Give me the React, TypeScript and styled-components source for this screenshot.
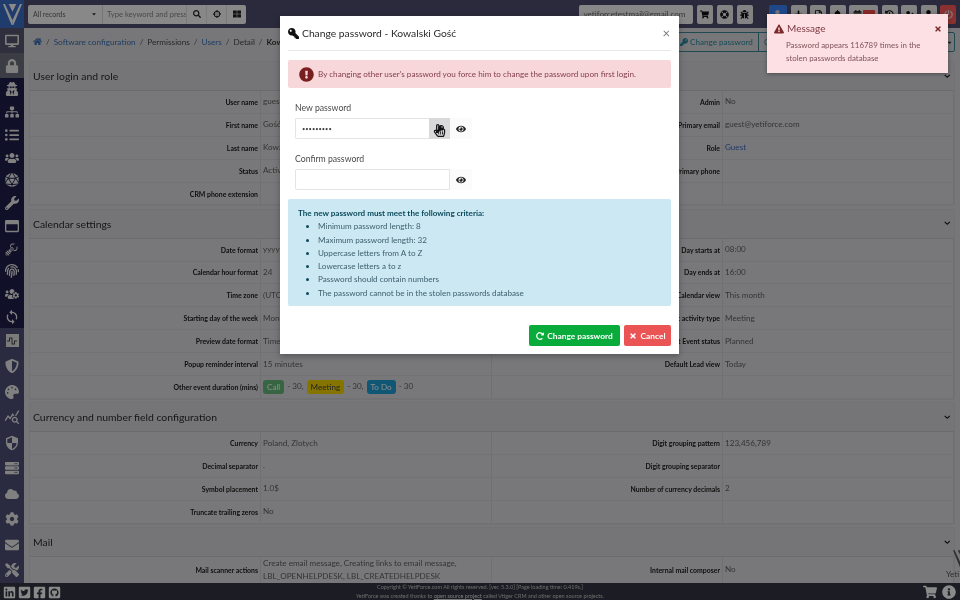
import React from 'react';
import styled, { createGlobalStyle } from 'styled-components';
import {
  FaHome, FaKey, FaSearch, FaThLarge, FaCrosshairs, FaShoppingCart, FaLifeRing, FaBug, FaPlus, FaRegFileAlt, FaBell,
  FaCalendarAlt, FaHistory, FaUserPlus, FaUser, FaPowerOff, FaChevronDown, FaEye, FaExclamationCircle, FaExclamationTriangle,
  FaTimes, FaRedoAlt, FaRegHandPointer, FaLinkedin, FaTwitterSquare, FaFacebookSquare, FaGithubSquare, FaInfoCircle,
  FaDesktop, FaLock, FaUserSecret, FaSitemap, FaListUl, FaUsers, FaDiceD20, FaWrench, FaRegWindowMaximize, FaFingerprint,
  FaUsersCog, FaShieldAlt, FaPalette, FaServer, FaCloud, FaCog, FaEnvelope, FaTools, FaWaveSquare, FaCaretDown,
} from 'react-icons/fa';
import { GiRobotGrab } from 'react-icons/gi';
import { MdSync, MdQueryStats, MdOutlineSecurity } from 'react-icons/md';

const GlobalStyle = createGlobalStyle`
  html, body { margin: 0; padding: 0; }
  body { font-family: Lato, "Open Sans", sans-serif; }
  * { box-sizing: border-box; }
`;

const Screen = styled.div`
  position: relative;
  width: 960px;
  height: 600px;
  overflow: hidden;
  display: grid;
  grid-template-columns: 24px 1fr;
  grid-template-rows: 583px 17px;
  background: #dcdbde;
  filter: blur(0.35px);
`;

const Sidebar = styled.nav`
  display: flex;
  flex-direction: column;
`;

const LogoTile = styled.div`
  height: 28px;
  background: #3a70c8;
  display: flex;
  align-items: center;
  justify-content: center;
  svg { width: 19px; height: 21px; }
`;

const NavGroup = styled.div<{ $bg: string; $h: number }>`
  display: flex;
  flex-direction: column;
  height: ${(p) => p.$h}px;
  background: ${(p) => p.$bg};
`;

const NavItem = styled.div<{ $active?: string }>`
  flex: 1;
  display: flex;
  align-items: center;
  justify-content: center;
  color: #ececec;
  font-size: 14px;
  background: ${(p) => p.$active || 'transparent'};
`;

const NavTile = styled.span`
  width: 13px;
  height: 13px;
  display: flex;
  align-items: center;
  justify-content: center;
  background: #e4e4e4;
  color: #444;
  font-size: 10px;
`;

const Main = styled.div`
  display: flex;
  flex-direction: column;
  min-width: 0;
`;

const TopBar = styled.header`
  height: 28px;
  flex: none;
  background: #4e4e6f;
  display: flex;
  align-items: center;
  padding: 0 4px;
`;

const SearchGroup = styled.div`
  display: flex;
  height: 19px;
  background: #fcfcfc;
  border-radius: 2px;
  color: #666;
  font-size: 7px;
  align-items: center;
`;

const RecordSelect = styled.div`
  width: 75px;
  height: 100%;
  display: flex;
  align-items: center;
  justify-content: space-between;
  padding: 0 5px;
  border-right: 1px solid #ddd;
  svg { font-size: 6px; color: #333; }
`;

const KeywordField = styled.div`
  width: 83px;
  padding-left: 4px;
  white-space: nowrap;
  overflow: hidden;
  font-size: 7.6px;
  color: #888;
`;

const SearchTool = styled.div`
  width: 20px;
  height: 100%;
  display: flex;
  align-items: center;
  justify-content: center;
  border-left: 1px solid #e4e4e4;
  color: #222;
  font-size: 8px;
`;

const Spacer = styled.div`
  flex: 1;
`;

const EmailBox = styled.div`
  width: 114px;
  height: 19px;
  border-radius: 2px;
  background: #fafafa;
  color: #666;
  font-size: 8.1px;
  line-height: 19px;
  padding-left: 5px;
  white-space: nowrap;
  margin-right: 4px;
`;

const TopButton = styled.div<{ $bg?: string; $w?: number; $mr?: number }>`
  position: relative;
  width: ${(p) => p.$w || 16}px;
  height: 19px;
  margin-right: ${(p) => p.$mr ?? 3.5}px;
  border-radius: 2px;
  background: ${(p) => p.$bg || '#f2f2f2'};
  color: #111;
  font-size: 9px;
  display: flex;
  align-items: center;
  justify-content: center;
`;

const BadgeCount = styled.span`
  width: 12px;
  height: 9px;
  margin-left: 1px;
  background: #ff4a4a;
  border-radius: 1px;
`;

const Crumbs = styled.div`
  height: 27px;
  flex: none;
  display: flex;
  align-items: center;
  padding-left: 9px;
  font-size: 8.2px;
  color: #4a4a4a;
  white-space: nowrap;
`;

const CrumbLink = styled.span`
  color: #3a70b5;
  svg { display: block; font-size: 9px; }
`;

const CrumbSep = styled.span`
  margin: 0 4px;
  color: #666;
`;

const CrumbBold = styled.b`
  color: #333;
`;

const CrumbActions = styled.div`
  margin-left: auto;
  margin-right: 5px;
  margin-top: 1px;
  height: 20px;
  width: 281px;
  display: flex;
  align-items: center;
  border: 1px solid #3d8798;
  border-radius: 2px;
  color: #2a8aa5;
  > svg { margin-left: auto; margin-right: 1px; font-size: 7px; color: #333; }
`;

const CrumbAction = styled.div<{ $w: number }>`
  display: flex;
  align-items: center;
  height: 100%;
  gap: 2px;
  width: ${(p) => p.$w}px;
  padding-left: 5px;
  border-right: 1px solid #3d8798;
  font-size: 8.1px;
`;

const Panels = styled.div`
  display: flex;
  flex-direction: column;
  gap: 2.2px;
  padding: 6px 5px 0 5px;
  min-height: 0;
  overflow: hidden;
`;

const Panel = styled.section`
  flex: none;
  background: #dedde0;
  border: 1px solid #d2d1d4;
  border-radius: 2px;
`;

const PanelHead = styled.div`
  height: 29px;
  display: flex;
  align-items: center;
  justify-content: space-between;
  padding: 0 3px 0 3px;
  background: #d8d7da;
  border-bottom: 1px solid #c6c5c8;
  color: #2c2c2e;
  font-size: 10.4px;
  svg { font-size: 6.5px; color: #111; margin-right: 1px; }
`;

const Rows = styled.div`
  display: grid;
  grid-template-columns: repeat(4, 1fr);
`;

const Label = styled.div`
  min-height: 22.9px;
  display: flex;
  align-items: center;
  justify-content: flex-end;
  padding-right: 2px;
  border-bottom: 1px solid #d2d1d4;
  border-right: 1px solid #cfced1;
  color: #1a1a1a;
  font-size: 6.9px;
  font-weight: 700;
  white-space: nowrap;
`;

const Value = styled.div`
  min-height: 22.9px;
  display: flex;
  flex-wrap: wrap;
  align-items: center;
  gap: 0 3px;
  padding-left: 2px;
  border-bottom: 1px solid #d2d1d4;
  border-right: 1px solid #cfced1;
  color: #626264;
  font-size: 8.1px;
  line-height: 13px;
`;

const RoleLink = styled.span`
  color: #3e6fc0;
`;

const Pill = styled.span<{ $bg: string }>`
  padding: 0 4px;
  height: 14px;
  font-size: 8.1px;
  line-height: 14px;
  border-radius: 3px;
  background: ${(p) => p.$bg};
  color: ${(p) => (p.$bg === '#f5d800' ? '#444' : '#fff')};
`;

const Footer = styled.footer`
  grid-column: 1 / 3;
  background: #343443;
  color: #c8c8c8;
  display: grid;
  grid-template-columns: 1fr auto 1fr;
  align-items: center;
  padding: 0 3px;
`;

const Socials = styled.div`
  display: flex;
  gap: 2px;
  color: #fff;
  font-size: 13px;
  svg { display: block; margin-top: 1px; }
`;

const Copyright = styled.div`
  text-align: center;
  font-size: 5.5px;
  line-height: 8.5px;
  u { color: #e0e0e0; }
`;

const FooterRight = styled.div`
  display: flex;
  justify-content: flex-end;
  align-items: center;
  gap: 5px;
  color: #fff;
  font-size: 14px;
  padding-right: 1px;
  svg { display: block; }
`;

const Watermark = styled.div`
  position: absolute;
  left: 946px;
  top: 549px;
  width: 40px;
  color: #555;
  font-size: 8px;
  white-space: nowrap;
  svg { display: block; margin-left: 7px; width: 16px; height: 20px; }
`;

const Backdrop = styled.div`
  position: absolute;
  inset: 0;
  background: rgba(0, 0, 0, 0.46);
`;

const Modal = styled.div`
  position: absolute;
  left: 280px;
  top: 16px;
  width: 399px;
  height: 338px;
  background: #fff;
  padding: 0 8px;
  display: flex;
  flex-direction: column;
  box-shadow: 0 2px 6px rgba(0, 0, 0, 0.3);
`;

const ModalHead = styled.div`
  height: 35px;
  flex: none;
  display: flex;
  align-items: center;
  gap: 3px;
  border-bottom: 1px solid #e8e8e8;
  color: #2a2a2a;
  font-size: 10.3px;
  svg { font-size: 11px; color: #111; transform: scaleX(-1); }
`;

const ModalClose = styled.span`
  margin-left: auto;
  color: #777;
  font-size: 13px;
  line-height: 1;
  margin-right: 1px;
`;

const DangerNote = styled.div`
  flex: none;
  margin-top: 9px;
  height: 28px;
  display: flex;
  align-items: center;
  gap: 4px;
  padding-left: 11px;
  background: #f8d7da;
  border-radius: 2px;
  color: #84404a;
  font-size: 8.15px;
  white-space: nowrap;
  svg { font-size: 15px; color: #7a1f1f; }
`;

const FieldBlock = styled.div<{ $top: number }>`
  flex: none;
  margin-top: ${(p) => p.$top}px;
  padding-left: 7px;
`;

const FieldLabel = styled.div`
  height: 13px;
  margin-bottom: 4px;
  color: #4a4a4a;
  font-size: 8.7px;
  line-height: 13px;
`;

const FieldRow = styled.div`
  display: flex;
  position: relative;
`;

const PassInput = styled.div<{ $wide?: boolean }>`
  width: ${(p) => (p.$wide ? 155 : 134)}px;
  height: 21px;
  border: 1px solid #e4e4e8;
  border-right: ${(p) => (p.$wide ? '1px solid #e4e4e8' : 'none')};
  border-radius: 2px 0 0 2px;
  padding-left: 6px;
  color: #444;
  font-size: 5.7px;
  line-height: 20px;
`;

const KeyButton = styled.div`
  width: 21px;
  height: 21px;
  background: #d9d9dc;
  display: flex;
  align-items: center;
  justify-content: center;
  color: #111;
  font-size: 8px;
`;

const EyeButton = styled.div`
  width: 22px;
  height: 21px;
  display: flex;
  align-items: center;
  justify-content: center;
  color: #222;
  font-size: 10px;
  background: #fbfbfb;
`;

const Pointer = styled.div`
  position: absolute;
  left: 138px;
  top: 6px;
  width: 10px;
  height: 14px;
  color: #111;
  font-size: 13px;
  line-height: 0;
  svg { display: block; }
`;

const InfoBox = styled.div`
  flex: none;
  margin-top: 9px;
  height: 107px;
  padding: 8px 10px;
  background: #cce8f2;
  border-radius: 2px;
  color: #3e5f6e;
  font-size: 8.1px;
  line-height: 13.3px;
  b { color: #0b4a5c; }
  ul { margin: 0; padding: 0 0 0 20px; }
  li::marker { color: #0b4a5c; }
`;

const ModalFoot = styled.div`
  flex: none;
  margin-top: 19px;
  display: flex;
  justify-content: flex-end;
  gap: 4px;
`;

const ActionButton = styled.div<{ $bg: string; $w: number }>`
  width: ${(p) => p.$w}px;
  height: 21px;
  display: flex;
  align-items: center;
  justify-content: center;
  gap: 3px;
  border-radius: 2px;
  background: ${(p) => p.$bg};
  color: #fff;
  font-size: 8.4px;
  font-weight: 700;
  svg { font-size: 8px; }
`;

const Toast = styled.div`
  position: absolute;
  left: 767px;
  top: 14px;
  width: 181px;
  height: 59px;
  background: #fde0e3;
  box-shadow: 0 1px 4px rgba(0, 0, 0, 0.35);
  padding: 7px 6px 0 7px;
  color: #7f525a;
  font-size: 7.9px;
  line-height: 13.4px;
`;

const ToastTitle = styled.div`
  display: flex;
  align-items: center;
  gap: 3px;
  height: 16px;
  margin-bottom: 2px;
  color: #7c3a42;
  font-size: 10px;
  svg { font-size: 10px; color: #7a2a2a; }
`;

const ToastClose = styled.span`
  margin-left: auto;
  color: #4a1a1f;
  svg { display: block; font-size: 8px; }
`;

const ToastBody = styled.div`
  padding-left: 12px;
  width: 150px;
`;

const YMark = ({ color }: { color: string }) => (
  <svg viewBox="0 0 20 22" fill={color}>
    <polygon points="0,0 2,0 10,17 10,22 9,22" />
    <polygon points="20,0 18,0 10,17 10,22 11,22" />
    <polygon points="6,0 14,0 10,8" />
  </svg>
);

const groupA = [<FaDesktop />, <FaLock />];
const groupB = [
  <FaUserSecret />, <FaSitemap />, <FaListUl />, <FaUsers />, <FaDiceD20 />, <FaWrench />, <FaRegWindowMaximize />,
  <GiRobotGrab />, <FaFingerprint />, <FaUsersCog />, <MdSync style={{ fontSize: 16 }} />,
];
const groupC = [
  <NavTile><FaWaveSquare /></NavTile>, <FaShieldAlt />, <FaPalette />, <MdQueryStats style={{ fontSize: 16 }} />, <MdOutlineSecurity style={{ fontSize: 16 }} />,
  <FaServer />, <FaCloud />, <FaCog />, <FaEnvelope />, <FaTools />,
];

type Cell = React.ReactNode;
const loginRows: Cell[][] = [
  ['User name', 'guest', 'Admin', 'No'],
  ['First name', 'Gość', 'Primary email', 'guest@yetiforce.com'],
  ['Last name', 'Kowalski', 'Role', <RoleLink>Guest</RoleLink>],
  ['Status', 'Active', 'Primary phone', ''],
  ['CRM phone extension', '', '', ''],
];
const calendarRows: Cell[][] = [
  ['Date format', 'yyyy-mm-dd', 'Day starts at', '08:00'],
  ['Calendar hour format', '24', 'Day ends at', '16:00'],
  ['Time zone', '(UTC+01:00) Warsaw', 'Calendar view', 'This month'],
  ['Starting day of the week', 'Monday', 'Default activity type', 'Meeting'],
  ['Preview date format', 'Timestamp', 'Default Event status', 'Planned'],
  ['Popup reminder interval', '15 minutes', 'Default Lead view', 'Today'],
  [
    'Other event duration (mins)',
    <>
      <Pill $bg="#66bb7a">Call</Pill> - 30, <Pill $bg="#f5d800">Meeting</Pill> - 30, <Pill $bg="#1f9fd8">To Do</Pill> - 30
    </>,
    '',
    '',
  ],
];
const currencyRows: Cell[][] = [
  ['Currency', 'Poland, Zlotych', 'Digit grouping pattern', '123,456,789'],
  ['Decimal separator', '.', 'Digit grouping separator', ''],
  ['Symbol placement', '1.0$', 'Number of currency decimals', '2'],
  ['Truncate trailing zeros', 'No', '', ''],
];
const mailRows: Cell[][] = [
  ['Mail scanner actions', 'Create email message, Creating links to email message, LBL_OPENHELPDESK, LBL_CREATEDHELPDESK', 'Internal mail composer', 'No'],
];

const InfoPanel = ({ title, rows }: { title: string; rows: Cell[][] }) => (
  <Panel>
    <PanelHead>
      {title}
      <FaChevronDown />
    </PanelHead>
    <Rows>
      {rows.map((r, i) => (
        <React.Fragment key={i}>
          <Label>{r[0]}</Label>
          <Value>{r[1]}</Value>
          <Label>{r[2]}</Label>
          <Value>{r[3]}</Value>
        </React.Fragment>
      ))}
    </Rows>
  </Panel>
);

export default function App() {
  return (
    <Screen>
      <GlobalStyle />
      <Sidebar>
        <LogoTile>
          <YMark color="#ffffff" />
        </LogoTile>
        <NavGroup $bg="#1e1e4a" $h={50}>
          <NavItem $active="#55556f">{groupA[0]}</NavItem>
          <NavItem $active="#6f6f7e">{groupA[1]}</NavItem>
        </NavGroup>
        <NavGroup $bg="#1e1e4a" $h={250}>
          {groupB.map((icon, i) => (
            <NavItem key={i}>{icon}</NavItem>
          ))}
        </NavGroup>
        <NavGroup $bg="#4e5177" $h={255}>
          {groupC.map((icon, i) => (
            <NavItem key={i}>{icon}</NavItem>
          ))}
        </NavGroup>
      </Sidebar>

      <Main>
        <TopBar>
          <SearchGroup>
            <RecordSelect>
              All records
              <FaCaretDown />
            </RecordSelect>
            <KeywordField>Type keyword and press</KeywordField>
            <SearchTool><FaSearch /></SearchTool>
            <SearchTool><FaCrosshairs /></SearchTool>
            <SearchTool><FaThLarge /></SearchTool>
          </SearchGroup>
          <Spacer />
          <EmailBox>yetiforcetestmail@gmail.com</EmailBox>
          <TopButton $mr={4}><FaShoppingCart /></TopButton>
          <TopButton $mr={4}><FaLifeRing /></TopButton>
          <TopButton $mr={16}><FaBug /></TopButton>
          <TopButton $bg="#3a85ff" $w={18} $mr={4}><FaUser color="#cfd8e8" /></TopButton>
          <TopButton><FaPlus /></TopButton>
          <TopButton><FaRegFileAlt /></TopButton>
          <TopButton><FaBell /></TopButton>
          <TopButton $w={29}><FaCalendarAlt /><BadgeCount /></TopButton>
          <TopButton><FaHistory /></TopButton>
          <TopButton><FaUserPlus /></TopButton>
          <TopButton><FaUser /></TopButton>
          <TopButton $bg="#ff5a5a" $mr={0}><FaPowerOff color="#f3d0d0" /></TopButton>
        </TopBar>

        <Crumbs>
          <CrumbLink><FaHome /></CrumbLink>
          <CrumbSep>/</CrumbSep>
          <CrumbLink>Software configuration</CrumbLink>
          <CrumbSep>/</CrumbSep>
          Permissions
          <CrumbSep>/</CrumbSep>
          <CrumbLink>Users</CrumbLink>
          <CrumbSep>/</CrumbSep>
          Detail
          <CrumbSep>/</CrumbSep>
          <CrumbBold>Kowalski Gość</CrumbBold>
          <CrumbActions>
            <CrumbAction $w={84}><FaKey /> Change password</CrumbAction>
            <CrumbAction $w={40}>C</CrumbAction>
            <FaCaretDown />
          </CrumbActions>
        </Crumbs>

        <Panels>
          <InfoPanel title="User login and role" rows={loginRows} />
          <InfoPanel title="Calendar settings" rows={calendarRows} />
          <InfoPanel title="Currency and number field configuration" rows={currencyRows} />
          <InfoPanel title="Mail" rows={mailRows} />
        </Panels>
      </Main>

      <Footer>
        <Socials>
          <FaLinkedin />
          <FaTwitterSquare />
          <FaFacebookSquare />
          <FaGithubSquare />
        </Socials>
        <Copyright>
          Copyright © YetiForce.com All rights reserved. [ver. 5.3.0] [Page loading time: 0.419s.]
          <br />
          YetiForce was created thanks to <u>open source project</u> called Vtiger CRM and other open source projects.
        </Copyright>
        <FooterRight>
          <FaShoppingCart />
          <FaInfoCircle />
        </FooterRight>
      </Footer>

      <Watermark>
        <YMark color="#555" />
        YetiForce
      </Watermark>

      <Backdrop />

      <Modal>
        <ModalHead>
          <FaKey />
          Change password - Kowalski Gość
          <ModalClose>×</ModalClose>
        </ModalHead>
        <DangerNote>
          <FaExclamationCircle />
          By changing other user's password you force him to change the password upon first login.
        </DangerNote>
        <FieldBlock $top={13}>
          <FieldLabel>New password</FieldLabel>
          <FieldRow>
            <PassInput>•••••••••</PassInput>
            <KeyButton><FaKey /></KeyButton>
            <EyeButton><FaEye /></EyeButton>
            <Pointer><FaRegHandPointer /></Pointer>
          </FieldRow>
        </FieldBlock>
        <FieldBlock $top={13}>
          <FieldLabel>Confirm password</FieldLabel>
          <FieldRow>
            <PassInput $wide />
            <EyeButton><FaEye /></EyeButton>
          </FieldRow>
        </FieldBlock>
        <InfoBox>
          <b>The new password must meet the following criteria:</b>
          <ul>
            <li>Minimum password length: 8</li>
            <li>Maximum password length: 32</li>
            <li>Uppercase letters from A to Z</li>
            <li>Lowercase letters a to z</li>
            <li>Password should contain numbers</li>
            <li>The password cannot be in the stolen passwords database</li>
          </ul>
        </InfoBox>
        <ModalFoot>
          <ActionButton $bg="#09ab3b" $w={91}><FaRedoAlt /> Change password</ActionButton>
          <ActionButton $bg="#ea5455" $w={47}><FaTimes /> Cancel</ActionButton>
        </ModalFoot>
      </Modal>

      <Toast>
        <ToastTitle>
          <FaExclamationTriangle />
          Message
          <ToastClose><FaTimes /></ToastClose>
        </ToastTitle>
        <ToastBody>
          Password appears 116789 times in the stolen passwords database
        </ToastBody>
      </Toast>
    </Screen>
  );
}
